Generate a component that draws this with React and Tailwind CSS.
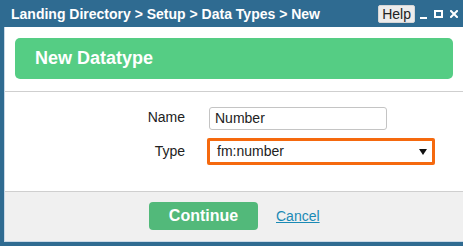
const FONT = "font-['Liberation_Sans',Arial,sans-serif]"

export default function App() {
  return (
    <div className={`${FONT} w-[463px] h-[246px] bg-[#2f6b91] flex flex-col overflow-hidden`}>
      {/* Title bar */}
      <div className="h-[27px] flex items-center pl-[11px] pr-[4px] shrink-0">
        <p className="text-[14px] font-bold text-white flex-1 leading-none">Landing Directory &gt; Setup &gt; Data Types &gt; New</p>
        <button className="h-[18px] px-[3px] bg-[#ececec] border border-[#d6d6d6] text-[#222] text-[14px] leading-none rounded-[2px]">Help</button>
        <div className="flex items-center gap-[7px] ml-[5px] text-white">
          <span className="w-[7px] h-[2px] bg-white mt-[8px]" />
          <span className="w-[9px] h-[8px] border-2 border-white" />
          <svg width="8" height="8" viewBox="0 0 8 8" className="mr-[1px]">
            <path d="M1 1 L7 7 M7 1 L1 7" stroke="white" strokeWidth="2" strokeLinecap="square" />
          </svg>
        </div>
      </div>

      {/* Body */}
      <div className="flex-1 ml-[4px] mb-[4px] bg-white border-l border-b border-[#c9d8e6] flex flex-col">
        <div className="pt-[11px] pl-[10px] pr-[10px] pb-[12px] border-b border-[#cfcfcf]">
          <div className="h-[41px] bg-[#55cd84] rounded-[5px] flex items-center pl-[20px]">
            <h1 className="text-[18px] font-bold text-white">New Datatype</h1>
          </div>
        </div>

        <div className="flex-1 grid grid-cols-[180px_auto] gap-y-[8px] content-start pt-[14px]">
          <label className="text-[14px] text-[#222] text-right pt-[1px]">Name</label>
          <div className="pl-[24px]">
            <input readOnly value="Number"
              className="w-[178px] h-[23px] border border-[#c4c4c4] rounded-[3px] px-[5px] text-[14px] text-[#222] outline-none" />
          </div>
          <label className="text-[14px] text-[#222] text-right pt-[3px]">Type</label>
          <div className="pl-[22px]">
            <div className="w-[228px] h-[27px] border-[3px] border-[#f5690e] rounded-[2px] flex items-center pl-[7px] pr-[5px]">
              <span className="flex-1 text-[14px] text-[#222]">fm:number</span>
              <svg width="8" height="6" viewBox="0 0 8 6"><path d="M0 0 H8 L4 6 Z" fill="#111" /></svg>
            </div>
          </div>
        </div>

        <div className="h-[50px] bg-[#f0f0f0] border-t border-[#cfcfcf] flex items-center pl-[144px] pb-[2px]">
          <button className="w-[109px] h-[28px] bg-[#52b97a] rounded-[4px] text-white text-[16px] font-bold">Continue</button>
          <a className="ml-[18px] text-[14px] text-[#1a8ab5] underline mt-[2px]">Cancel</a>
        </div>
      </div>
    </div>
  )
}
